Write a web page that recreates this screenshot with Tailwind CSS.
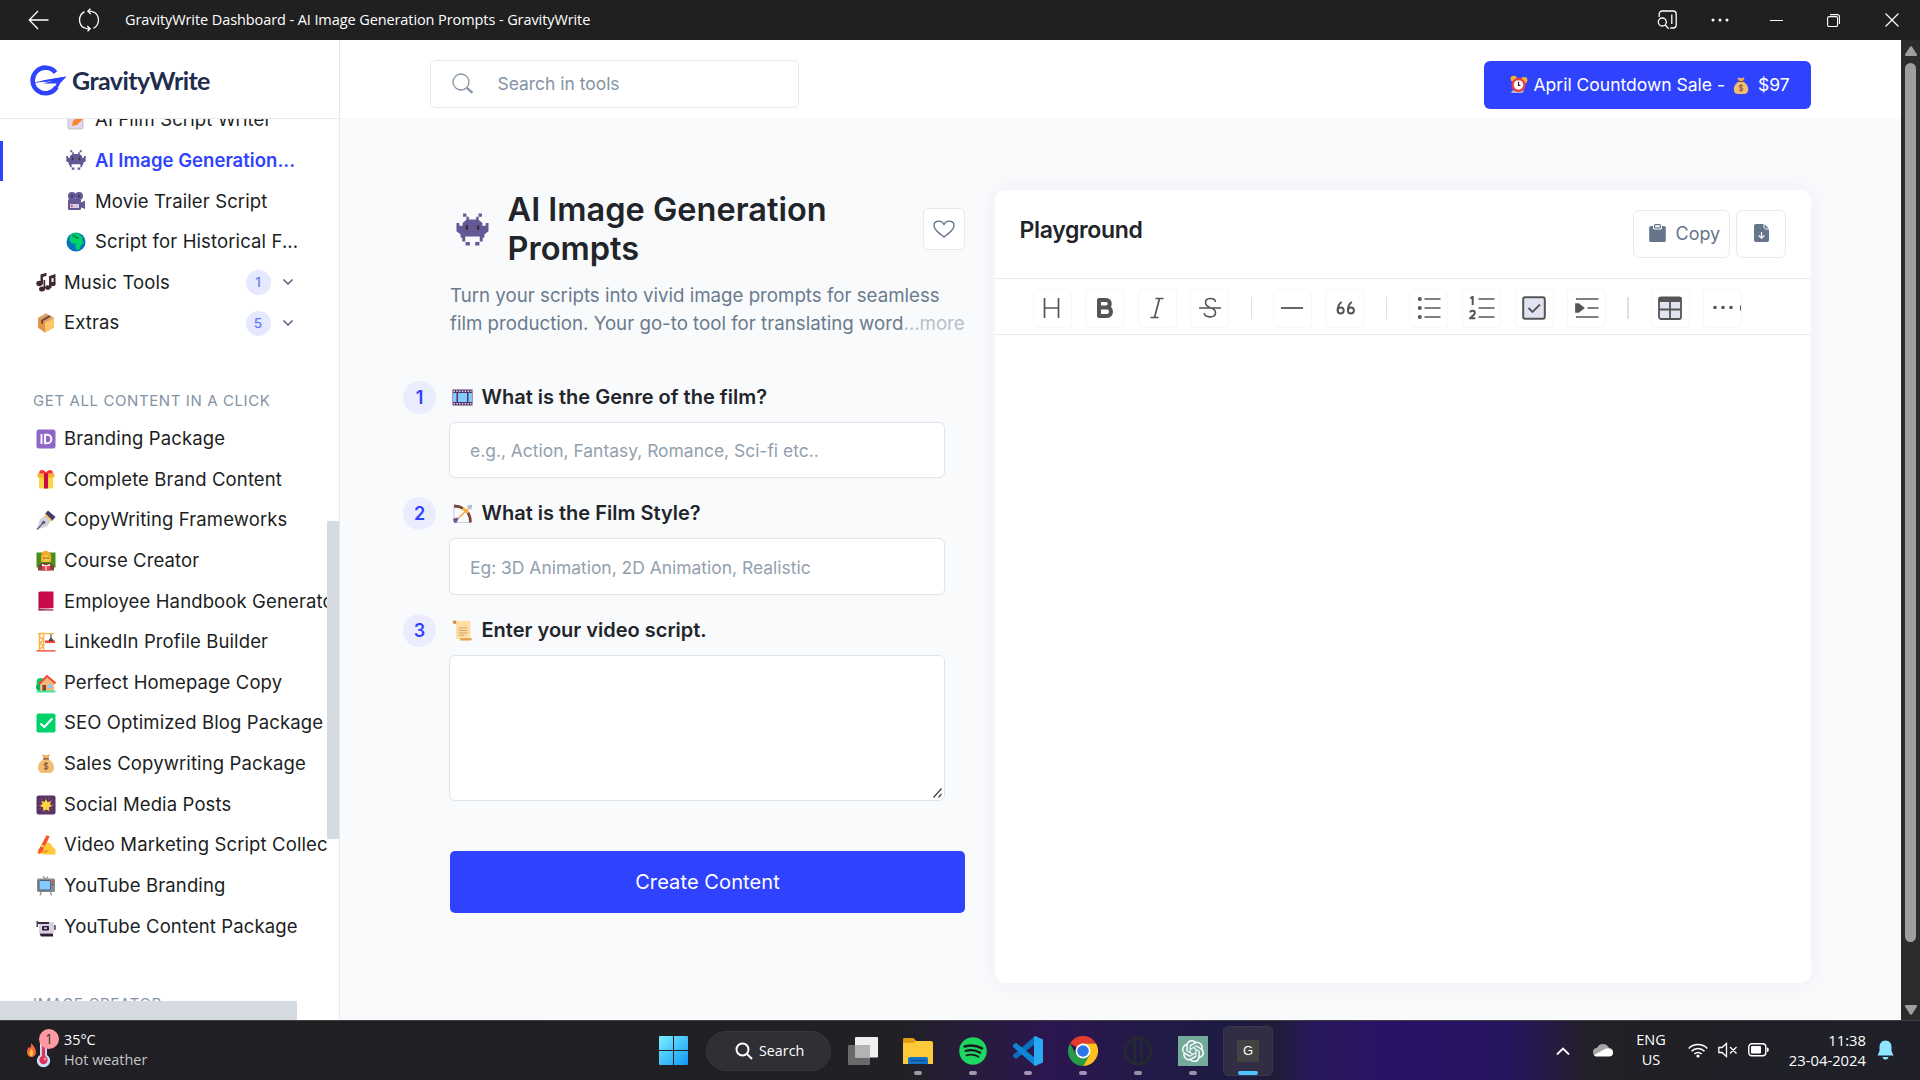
<!DOCTYPE html>
<html lang="en">
<head>
<meta charset="utf-8">
<title>GravityWrite Dashboard</title>
<script src="https://cdn.jsdelivr.net/npm/@tailwindcss/browser@4"></script>
</head>
<body class="w-[1920px] h-[1080px] overflow-hidden flex flex-col bg-white font-['Inter',sans-serif] text-[#212529]">

<svg class="hidden">
  <symbol id="alien" viewBox="0 0 20 20"><path d="M4.300.3h2v1.900h-2zM13.700.3h2v1.900h-2zM6.300 2.200h1.500v2.200H6.300zM12.200 2.200h1.500v2.200h-1.500zM6.500 4h7l2.500 2v1.800h2V6h1.700v5l-2.500 2v2h-1v2.200h-1.800v-2.900H5.600v2.900H3.800V15h-1v-2L.3 11V6H2v1.800h2V6zM5.800 17.500h2.600v2.200H5.800zM11.600 17.500h2.600v2.200h-2.600z" fill="#635994"/><path d="M5.900 7.400h1.400v2.800H5.900zM12.700 7.400h1.400v2.800h-1.400z" fill="#402a32"/></symbol>
  <symbol id="bag" viewBox="0 0 20 20"><path d="M7 .5l3 1 3-1 1 1-2 3H8l-2-3z" fill="#f3ad61"/><path d="M8 5h4c3.500 1.500 6 5 6 8.500 0 3.500-2 5.500-5 5.500H7c-3 0-5-2-5-5.500C2 10 4.500 6.500 8 5z" fill="#f1bd73"/><path d="M7 4.300h6v1.200H7z" fill="#7d4533"/><path d="M12 10.200c-.5-.8-1.200-1-2-1-2.600 0-2.600 2.600 0 2.900 2.600.3 2.600 3 0 3-.9 0-1.700-.4-2.100-1.200M10 8v8.300" stroke="#7d4533" stroke-width="1" fill="none"/></symbol>
  <symbol id="chev" viewBox="0 0 12 8"><path d="M1.500 1.500L6 6l4.500-4.500" fill="none" stroke="#4b5f78" stroke-width="1.500"/></symbol>
</svg>

<!-- Window title bar -->
<header class="h-10 shrink-0 bg-[#202020] text-white flex items-center font-['Open_Sans',sans-serif]">
  <svg class="ml-7 w-[21px] h-[20px]" viewBox="0 0 21 20" fill="none" stroke="#fff" stroke-width="1.300"><path d="M20.500 10H1.500M10 1L1.300 10l8.700 9"/></svg>
  <svg class="ml-[29px] w-[22px] h-[24px]" viewBox="0 0 22 24" fill="none" stroke="#fff" stroke-width="1.300"><path d="M6.500 3.600A9.500 9.500 0 0 0 6 20M15.500 20.400A9.500 9.500 0 0 0 16 4M12.500.8L9.800 3.300l3 2.700M10 3.300c2.500-.4 4.500.3 6 1.200M9.500 23.200l2.700-2.500-3-2.700M12 20.700c-2.500.4-4.500-.3-6-1.200"/></svg>
  <span class="ml-[25px] -mt-px text-[14.5px] whitespace-nowrap tracking-[-0.09px]">GravityWrite Dashboard - AI Image Generation Prompts - GravityWrite</span>
  <div class="ml-auto flex items-center pr-[21.5px]">
    <svg class="w-5 h-5" viewBox="0 0 20 20" fill="none" stroke="#fff" stroke-width="1.300"><path d="M2.200 7V4a3 3 0 0 1 3-3h11a3 3 0 0 1 3 3v11a3 3 0 0 1-3 3h-3M14.800 4.500v9.500"/><circle cx="5.300" cy="12" r="4"/><path d="M8.200 15l3.600 3.900"/></svg>
    <svg class="ml-[34px] w-[18px] h-1" viewBox="0 0 18 4" fill="#fff"><circle cx="2" cy="2" r="1.500"/><circle cx="9" cy="2" r="1.500"/><circle cx="16" cy="2" r="1.500"/></svg>
    <div class="ml-[41px] w-[13px] h-px bg-white"></div>
    <svg class="ml-[44px] w-[13px] h-[13px]" viewBox="0 0 13 13" fill="none" stroke="#fff" stroke-width="1.100"><rect x=".6" y="2.600" width="10" height="10" rx="1.500"/><path d="M3 .6h7.400a2 2 0 0 1 2 2V10"/></svg>
    <svg class="ml-[45px] w-[14px] h-[14px]" viewBox="0 0 14 14" stroke="#fff" stroke-width="1.200"><path d="M.5.500l13 13M13.500.500l-13 13"/></svg>
  </div>
</header>

<div class="h-[980px] shrink-0 flex">
  <!-- Sidebar -->
  <aside class="relative w-[340px] shrink-0 border-r border-[#e7e9ed] flex flex-col overflow-hidden bg-white">
    <div class="h-[79px] shrink-0 border-b border-[#e7eaee] flex items-center pl-[29px]">
      <svg class="w-[38px] h-[31px] mt-[2px]" viewBox="0 0 38 31"><path d="M26.500 7.500A12.800 12.800 0 1 0 27.500 22" fill="none" stroke="#2f43ff" stroke-width="4.600"/><path d="M4 17.500L37.500 11.500 31 18.500 28 24.500l-3-.5 2.500-5.500H14l9-2.500-19 2z" fill="#2f43ff"/><path d="M13 15.500l24-4-10 4.500-4-.5-6 1.500z" fill="#2f43ff"/></svg>
      <span class="ml-[5px] mt-[3px] text-[25px] font-bold font-['Lato',sans-serif] text-[#1f2d4d] tracking-[-0.55px]">GravityWrite</span>
    </div>
    <div class="flex-1 overflow-hidden mr-3">
      <nav class="-mt-[19.5px] text-[18.5px] tracking-[0.12px] whitespace-nowrap text-[#1b1e22]">
        <div class="h-[40.67px] flex items-center pl-[66px]"><svg class="w-5 h-5 shrink-0" viewBox="0 0 20 20"><rect x="2" y="2" width="15" height="17" rx="1.500" fill="#e1d8ec" stroke="#b4acbc" stroke-width=".7"/><path d="M6 16l1-5 8-8 4 4-8 8z" fill="#ff822d"/><path d="M14 3.500L16 1.500l4 3.500-2 2.500z" fill="#f8312f"/></svg><span class="ml-[9px]">AI Film Script Writer</span></div>
        <div class="relative h-[40.67px] flex items-center pl-[66px] text-[#2f43ff] font-semibold tracking-[0.04px]"><i class="absolute left-0 top-px w-[3px] h-10 bg-[#2f43ff]"></i><svg class="w-5 h-5 shrink-0"><use href="#alien"/></svg><span class="ml-[9px]">AI Image Generation...</span></div>
        <div class="h-[40.67px] flex items-center pl-[66px]"><svg class="w-5 h-5 shrink-0" viewBox="0 0 20 20" fill="#635994"><circle cx="6" cy="5" r="4"/><circle cx="13" cy="5" r="4"/><rect x="2" y="8" width="13" height="11" rx="1.500"/><path d="M14 12l5-2.500v8.500l-5-2z"/><path d="M4 13h9v4H4z" fill="#d8cbe6"/><path d="M5 14h1.500v2H5z" fill="#f33"/><circle cx="6" cy="5" r="1.200" fill="#433b6b"/><circle cx="13" cy="5" r="1.200" fill="#433b6b"/></svg><span class="ml-[9px] mt-px">Movie Trailer Script</span></div>
        <div class="h-[40.67px] flex items-center pl-[66px]"><svg class="w-5 h-5 shrink-0" viewBox="0 0 20 20"><circle cx="10" cy="10" r="9.500" fill="#0074ba"/><path d="M4 3l4-2 5 .5 4 4.500-1 2 2 3-3 2-1.500 4.500-2.500.5-1.500-3V11.500H6L3.500 8.500z" fill="#00d26a"/><path d="M6 4l3-.5 1 2 3 .5" stroke="#008463" fill="none" stroke-width="1.500"/></svg><span class="ml-[9px]">Script for Historical F...</span></div>
        <div class="h-[40.67px] flex items-center pl-[36px]"><svg class="w-5 h-5 shrink-0" viewBox="0 0 20 20" fill="#402a32"><path d="M4.500 2.500l6-1.800v3l-3.500 1.200v7.600H4.500zM12 4.500l7.500-2.500v3.200L15.500 6.500v9.500H13v-11.500zM17.500 3h2v9h-2z"/><ellipse cx="3.300" cy="11.500" rx="3" ry="2.700"/><ellipse cx="11.800" cy="15.500" rx="2.700" ry="2.300"/><ellipse cx="6" cy="17" rx="3" ry="2.500"/><ellipse cx="17" cy="12" rx="2.600" ry="2.200"/><path d="M7.500 8h1.700v9H7.500z"/></svg><span class="ml-2">Music Tools</span><b class="ml-auto w-[25px] h-[25px] rounded-full bg-[#e6e8ff] text-[#6b77f5] text-[13.5px] font-medium flex items-center justify-center">1</b><svg class="ml-[11px] mr-[33.5px] w-3 h-2 shrink-0"><use href="#chev"/></svg></div>
        <div class="h-[40.67px] flex items-center pl-[36px]"><svg class="w-5 h-5 shrink-0" viewBox="0 0 20 20"><path d="M2 5l8-4.500 8 4.500v9.500L9 19.500l-7-5z" fill="#e39d5d"/><path d="M2 5l7 4.500v10l-7-5z" fill="#e19747"/><path d="M9 9.500L18 5v9.500l-9 5z" fill="#ffc56b"/><path d="M2 5l8-4.500L18 5 9 9.500z" fill="#d9a46e"/><path d="M5 7l8-4.800L15 3.500 7 8.200v3L5 10z" fill="#7d4533"/></svg><span class="ml-2">Extras</span><b class="ml-auto w-[25px] h-[25px] rounded-full bg-[#e6e8ff] text-[#6b77f5] text-[13.5px] font-medium flex items-center justify-center">5</b><svg class="ml-[11px] mr-[33.5px] w-3 h-2 shrink-0"><use href="#chev"/></svg></div>

        <h6 class="h-[75px] pt-[46px] pl-[33px] text-[15px] leading-[23px] font-normal text-[#8493a5] tracking-[0.6px]">GET ALL CONTENT IN A CLICK</h6>

        <div class="h-[40.67px] flex items-center pl-[36px] gap-2"><svg class="w-5 h-5 shrink-0" viewBox="0 0 20 20"><rect x=".5" y=".5" width="19" height="19" rx="2.500" fill="#8f65c5"/><path d="M5.500 5v10M9 5.700v8.600h2.300c5.400 0 5.400-8.600 0-8.600z" fill="none" stroke="#fff" stroke-width="1.900"/></svg><span>Branding Package</span></div>
        <div class="h-[40.67px] flex items-center pl-[36px] gap-2"><svg class="w-5 h-5 shrink-0" viewBox="0 0 20 20"><path d="M3 8h14v11.500H3z" fill="#fcd53f"/><path d="M1.500 4.500h17v4h-17z" fill="#ffb02e"/><path d="M8 4h4v15.500H8z" fill="#ca0b4a"/><path d="M3 4.500C3 0 8 0 10 3.500 12 0 17 0 17 4.500z" fill="#f8312f"/></svg><span>Complete Brand Content</span></div>
        <div class="h-[40.67px] flex items-center pl-[36px] gap-2"><svg class="w-5 h-5 shrink-0" viewBox="0 0 20 20"><path d="M1 19.500L4 9l6-4 5 5.500-4 6z" fill="#d3d3d3"/><path d="M1 19.500l6-6.500" stroke="#635994" stroke-width="1.200"/><circle cx="7.500" cy="12.500" r="1.800" fill="#635994"/><path d="M9 4l3-3.500 7.500 6.500-3.500 4z" fill="#433b6b"/><path d="M8.500 4.500L9.500 3.500l7 7-1 1z" fill="#f9c23c"/></svg><span>CopyWriting Frameworks</span></div>
        <div class="h-[40.67px] flex items-center pl-[36px] gap-2"><svg class="w-5 h-5 shrink-0" viewBox="0 0 20 20"><rect x=".5" y="1.500" width="19" height="15" fill="#44911b"/><path d="M2 19.500v-5l4-2.500h8l4 2.500v5z" fill="#7d4533"/><path d="M5 11C4.500 1 7-.5 10 0c4 0 6 3 5 11z" fill="#f9a72e"/><circle cx="10" cy="7.500" r="3.500" fill="#ffc83d"/><path d="M7 7h2.500M10.500 7H13" stroke="#7d4533"/><path d="M6 13l4 1.500 4-1.500v2H6z" fill="#fff"/><path d="M6 15h8v4.500H6z" fill="#ef3a5d"/><path d="M9.300 14h1.500v5.500H9.300z" fill="#ffd5a0"/></svg><span>Course Creator</span></div>
        <div class="h-[40.67px] flex items-center pl-[36px] gap-2"><svg class="w-5 h-5 shrink-0" viewBox="0 0 20 20"><path d="M2.500 1h14.500v16l-14.500 2.500z" fill="#990838"/><rect x="3.500" y=".5" width="14" height="16.500" fill="#ca0b4a"/><path d="M3.500 17.300h13.800v1H3.500z" fill="#e9dff0"/><path d="M3 18.400h14.500v1.100H3z" fill="#990838"/></svg><span>Employee Handbook Generator</span></div>
        <div class="h-[40.67px] flex items-center pl-[36px] gap-2"><svg class="w-5 h-5 shrink-0" viewBox="0 0 20 20"><path d="M3 1.500h7M3.500 1v17M7.500 3v15M4 5l3.500 3L4 11l3.500 3L4 17" stroke="#f9b44a" stroke-width="1.500" fill="none"/><path d="M9 8.500h10V11H9z" fill="#f8412f"/><path d="M2 1h16v1.200H2z" fill="#f9b44a"/><path d="M15 2v3.500l-2 3h4l-2-3" stroke="#433b4b" fill="#666"/><path d="M.5 18h19v1.700H.5z" fill="#f86a5f"/></svg><span>LinkedIn Profile Builder</span></div>
        <div class="h-[40.67px] flex items-center pl-[36px] gap-2"><svg class="w-5 h-5 shrink-0" viewBox="0 0 20 20"><circle cx="4.500" cy="9" r="4" fill="#00d26a"/><circle cx="4" cy="14" r="4" fill="#00b85c"/><path d="M4 10.500L11 4l7 6.500V18H4z" fill="#f3b77b"/><path d="M3 11L11 3l8.500 7.500" stroke="#f8412f" stroke-width="2" fill="none"/><path d="M6.500 12h3.500v6H6.500z" fill="#7d4533"/><path d="M12.500 11.500h3.500v3.500h-3.500z" fill="#7ad0ff"/><path d="M.5 17.500h19v2H.5z" fill="#3ee89a"/></svg><span>Perfect Homepage Copy</span></div>
        <div class="h-[40.67px] flex items-center pl-[36px] gap-2"><svg class="w-5 h-5 shrink-0" viewBox="0 0 20 20"><rect x=".5" y=".5" width="19" height="19" rx="2" fill="#00d26a"/><path d="M4.500 10.500l3.800 3.500 8-8.500" fill="none" stroke="#fff" stroke-width="2"/></svg><span>SEO Optimized Blog Package</span></div>
        <div class="h-[40.67px] flex items-center pl-[36px] gap-2"><svg class="w-5 h-5 shrink-0"><use href="#bag"/></svg><span>Sales Copywriting Package</span></div>
        <div class="h-[40.67px] flex items-center pl-[36px] gap-2"><svg class="w-5 h-5 shrink-0" viewBox="0 0 20 20"><rect x=".5" y=".5" width="19" height="19" rx="2" fill="#533566"/><circle cx="10" cy="10" r="7" fill="none" stroke="#d8413f" stroke-width="1.500" stroke-dasharray="1 2.500"/><path d="M10 4l1.500 3.200L15 6l-1 3.400 2.500 1.600-3.500 1.300.2 3.700-3.200-1.600L7.300 16l-.3-3.700L3.800 11l2.700-1.900L5.300 6l3.200 1z" fill="#fcd53f"/></svg><span>Social Media Posts</span></div>
        <div class="h-[40.67px] flex items-center pl-[36px] gap-2"><svg class="w-5 h-5 shrink-0" viewBox="0 0 20 20"><path d="M1 16.500L6.500 9l5.500-1.500 2.500 1 1.500 2.500 3.500 3.500v5H8L1.500 18z" fill="#ffc83d"/><path d="M6 17.800l4-3 2.500 1.200-2 1.800z" fill="#f09a1e"/><path d="M10.500.3l3.200 1.200L6.300 16.500 2.500 19.500l.2-4.500z" fill="#f8512f"/><path d="M5.500 9.500l4.500 1.500-1 2-4.500-1.500z" fill="#ffc83d"/></svg><span>Video Marketing Script Collection</span></div>
        <div class="h-[40.67px] flex items-center pl-[36px] gap-2"><svg class="w-5 h-5 shrink-0" viewBox="0 0 20 20"><path d="M7 .5l3 3 2-3M5.500 15l-1.500 4.500M14 15l1.500 4.500" stroke="#888" stroke-width="1.100" fill="none"/><rect x="1" y="2.500" width="18" height="13.500" rx="1.500" fill="#8b8b8b"/><rect x="3" y="4.500" width="11.500" height="9.500" rx="1" fill="#83cbff" stroke="#444a60" stroke-width=".8"/><circle cx="16.800" cy="5.500" r="1" fill="#f33"/><circle cx="16.800" cy="8.500" r=".8" fill="#444"/></svg><span>YouTube Branding</span></div>
        <div class="h-[40.67px] flex items-center pl-[36px] gap-2"><svg class="w-5 h-5 shrink-0" viewBox="0 0 20 20"><path d="M.5 4h1.500v6H.5zM18.200 8h1.500v5h-1.500z" fill="#433b6b"/><rect x="3" y="5" width="15" height="11" rx="1" fill="#d7d3dc"/><path d="M2 5h11v2H2z" fill="#3a2c46"/><rect x="6" y="9" width="7" height="4.500" rx="1" fill="#321b41"/><path d="M8 10.500h3v1.300H8z" fill="#fff"/><path d="M3.500 16.500h13.500v3H5z" fill="#321b41"/></svg><span>YouTube Content Package</span></div>
        <h6 class="pt-[45px] pl-[33px] text-[15px] leading-[23px] font-normal text-[#8493a5] tracking-[0.6px]">IMAGE CREATOR</h6>
      </nav>
    </div>
    <i class="absolute left-[327px] top-[481px] w-3 h-[318px] bg-[#d6dae1]"></i>
    <i class="absolute left-0 bottom-0 w-[297px] h-[19px] bg-[#d6dae1]"></i>
  </aside>

  <!-- Content -->
  <main class="flex-1 flex flex-col bg-[#f9fafc]">
    <div class="h-[78px] shrink-0 bg-white flex items-center justify-between pl-[90px] pr-[90px]">
      <div class="w-[369px] h-[48px] mt-[9px] rounded-[6px] border border-[#e7eaee] flex items-center pl-[21px] text-[#8493a5]">
        <svg class="w-[22px] h-[21px]" viewBox="0 0 22 21" fill="none" stroke="#8493a5" stroke-width="1.300"><circle cx="9" cy="9" r="8"/><path d="M14.800 14.800l5.700 5" stroke-width="2.200"/></svg>
        <span class="ml-[23.5px] mt-0.5 text-[17.45px]">Search in tools</span>
      </div>
      <div class="w-[327px] h-[48px] mt-[12px] rounded-[6px] bg-[#2f43ff] text-white text-[17.5px] flex items-center whitespace-nowrap pl-[25px]">
        <svg class="w-[19px] h-[19px] -mt-0.5" viewBox="0 0 20 20"><path d="M4 16l-2 3h12l2-3z" fill="#b4bccc"/><circle cx="5" cy="4" r="3.300" fill="#f9b42e"/><circle cx="16" cy="5.500" r="3.300" fill="#f9b42e"/><circle cx="10" cy="10.500" r="7.500" fill="#e8403f"/><circle cx="10" cy="10.500" r="5" fill="#fff"/><path d="M10 7v4h2" stroke="#402a32" stroke-width="1.300" fill="none"/></svg>
        <span class="ml-[5.5px]">April Countdown Sale -</span>
        <svg class="ml-[7px] w-[18px] h-[18px] mt-px"><use href="#bag"/></svg>
        <span class="ml-[8px]">$97</span>
      </div>
    </div>

    <div class="flex-1 flex">
      <!-- Tool form -->
      <section class="w-[655px] pt-[72px] pl-[63px]">
        <div class="ml-[47px] w-[515px]">
          <div class="flex items-center">
            <svg class="ml-[5px] w-[35px] h-[33px] mt-px"><use href="#alien"/></svg>
            <h1 class="ml-[17.5px] text-[32.5px] leading-[39px] font-semibold flex-1">AI Image Generation<br>Prompts</h1>
            <div class="w-[42px] h-[42px] rounded-[5px] border border-[#e7e9ed] bg-white flex items-center justify-center"><svg class="w-[22px] h-[18px]" viewBox="0 0 22 18" fill="none" stroke="#5c6f84" stroke-width="1.300"><path d="M11 17C5 12.500 1 9.500 1 5.500c0-5 7.500-6.300 10-1 2.500-5.300 10-4 10 1 0 4-4 7-10 11.500z"/></svg></div>
          </div>
          <p class="mt-[14px] text-[18.7px] leading-[28px] text-[#6a7b8d] whitespace-nowrap">Turn your scripts into vivid image prompts for seamless<br>film production. Your go-to tool for translating word<span class="text-[#b6bfc9]">...more</span></p>
        </div>

        <div class="mt-[43px] flex items-center h-[33px]">
          <b class="w-[33px] h-[33px] rounded-full bg-[#ececff] text-[#2f43ff] text-[18px] font-semibold flex items-center justify-center">1</b>
          <svg class="ml-4 w-[21px] h-[20px]" viewBox="0 0 21 20"><rect x=".5" y="1.500" width="20" height="16" fill="#533566"/><path d="M1 5h3.500v9H1zM6 5h9v9H6zM16.500 5H20v9h-3.500z" fill="#83cbff"/><path d="M1.500 3.200h18M1.500 15.800h18" stroke="#e6dcf0" stroke-width="1.500" stroke-dasharray="1.400 1.400"/></svg>
          <span class="ml-[8.5px] -mt-px text-[20px] font-semibold">What is the Genre of the film?</span>
        </div>
        <div class="ml-[46px] mt-[8px] w-[496px] h-[56px] rounded-[6px] border border-[#e0e4e9] bg-white flex items-center pl-5 pt-[3px] text-[17.45px] text-[#93a0ae]">e.g., Action, Fantasy, Romance, Sci-fi etc..</div>

        <div class="mt-[19px] flex items-center h-[33px]">
          <b class="w-[33px] h-[33px] rounded-full bg-[#ececff] text-[#2f43ff] text-[18px] font-semibold flex items-center justify-center">2</b>
          <svg class="ml-4 w-[21px] h-[20px]" viewBox="0 0 21 20" fill="none"><path d="M2 2.500V18.500H18" stroke="#d0c8dc" stroke-width="1"/><path d="M2 2l5 .5 4 2M18.500 18.500l-.5-5-2-5" stroke="#7d4533" stroke-width="2.800"/><path d="M11 4.500l5 4" stroke="#f9b42e" stroke-width="3"/><path d="M3 17.500L17 4" stroke="#f3a355" stroke-width="1.400"/><path d="M14.500 2L20.500.5 19 6z" fill="#b4bccc"/><path d="M.8 15l4-1.500 1.500 1.500-2 4-2-.5z" fill="#635994"/></svg>
          <span class="ml-[8.5px] -mt-px text-[20px] font-semibold">What is the Film Style?</span>
        </div>
        <div class="ml-[46px] mt-[8px] w-[496px] h-[57px] rounded-[6px] border border-[#e0e4e9] bg-white flex items-center pl-5 pt-[3px] text-[17.45px] text-[#93a0ae]">Eg: 3D Animation, 2D Animation, Realistic</div>

        <div class="mt-[19px] flex items-center h-[33px]">
          <b class="w-[33px] h-[33px] rounded-full bg-[#ececff] text-[#2f43ff] text-[18px] font-semibold flex items-center justify-center">3</b>
          <svg class="ml-4 w-[21px] h-[21px]" viewBox="0 0 21 21"><path d="M1 .8h15.500c1.500 0 2 1 2 2V19H6c-1.500 0-2-1-2-2V4H1.500z" fill="#ffdea7"/><path d="M.7.800h3.500v3H1.500z" fill="#d3883e"/><path d="M8 18.200h12c0 1.500-1 2.300-2 2.300H8z" fill="#e39d4d"/><path d="M6.500 8h9M6.500 10.500h9M6.500 13h9M6.500 15.200h6" stroke="#d9a25f"/></svg>
          <span class="ml-[8.5px] -mt-px text-[20px] font-semibold">Enter your video script.</span>
        </div>
        <div class="ml-[46px] mt-[8px] w-[496px] h-[146px] rounded-[6px] border border-[#e0e4e9] bg-white flex items-end justify-end p-[2px]"><svg class="w-[9px] h-[10px]" viewBox="0 0 9 10" stroke="#444" stroke-width="1.300"><path d="M.5 9.500l8-9M5.500 9.500l3-3.500"/></svg></div>

        <button class="ml-[47px] mt-[50px] w-[515px] h-[62px] rounded-[5px] bg-[#2f43ff] text-white text-[20px] tracking-[0.1px] block">Create Content</button>
      </section>

      <!-- Playground -->
      <section class="mt-[72px] w-[816px] h-[793px] rounded-[10px] bg-white shadow-[0_0_22px_rgba(40,50,80,0.06)]">
        <div class="h-[88px] flex items-center pl-[24.5px] pr-[25px]">
          <h2 class="text-[23px] tracking-[-0.33px] font-semibold -mt-[7px]">Playground</h2>
          <div class="ml-auto h-[48px] w-[97px] rounded-[6px] border border-[#e7e9ed] flex items-center pl-[15px] text-[18px] text-[#66758a]">
            <svg class="w-[17px] h-[18px] -mt-0.5" viewBox="0 0 17 18"><path d="M2 2h2v2.500l1 1h7l1-1V2h2a1.800 1.800 0 0 1 1.800 1.800V16A1.800 1.800 0 0 1 15 18H2a1.800 1.800 0 0 1-1.800-2V3.800A1.800 1.800 0 0 1 2 2z" fill="#66758a"/><rect x="5.500" y=".7" width="6" height="3.200" rx="1" fill="none" stroke="#66758a" stroke-width="1.200"/></svg>
            <span class="ml-[9.5px] -mt-px">Copy</span>
          </div>
          <div class="ml-[6px] h-[48px] w-[50px] rounded-[6px] border border-[#e7e9ed] flex items-center justify-center"><svg class="w-[15px] h-[18px] -mt-0.5" viewBox="0 0 15 18"><path d="M2 0h7.500v3.500L11.500 5.500H15V16a2 2 0 0 1-2 2H2a2 2 0 0 1-2-2V2a2 2 0 0 1 2-2zM10.500.300L14.700 4.500h-3a1.200 1.200 0 0 1-1.200-1.200z" fill="#66758a"/><path d="M7.500 8v6M4.700 11.500l2.800 2.700 2.800-2.700" stroke="#fff" stroke-width="1.200" fill="none"/></svg></div>
        </div>
        <div class="h-[57px] border-t border-b border-[#e9e9ee] flex items-center pl-[37.5px] pt-[3px] gap-[13.6px] text-[#555]">
          <div class="w-[39px] h-[39px] shrink-0 rounded-[4px] border border-[#f7f7fa] grid place-items-center"><svg class="w-[24px] h-[24px]" viewBox="0 0 24 24" fill="none" stroke="#555" stroke-width="1.700"><path d="M4.500 2v20M18.500 2v20M4.500 12h14"/></svg></div>
          <div class="w-[39px] h-[39px] shrink-0 rounded-[4px] border border-[#f7f7fa] grid place-items-center"><svg class="w-[24px] h-[24px]" viewBox="0 0 24 24" fill="none" stroke="#555" stroke-width="4"><path d="M6 4h7c5 0 5 7.500 0 7.500H6zM6 11.500h8c5.300 0 5.300 8.500 0 8.500H6z" stroke-linejoin="round"/></svg></div>
          <div class="w-[39px] h-[39px] shrink-0 rounded-[4px] border border-[#f7f7fa] grid place-items-center"><svg class="w-[24px] h-[24px]" viewBox="0 0 24 24" fill="none" stroke="#555" stroke-width="1.700"><path d="M10.500 2.500h8M5.500 21.500h8M14.500 2.500l-5 19"/></svg></div>
          <div class="w-[39px] h-[39px] shrink-0 rounded-[4px] border border-[#f7f7fa] grid place-items-center"><svg class="w-[24px] h-[24px]" viewBox="0 0 24 24" fill="none" stroke="#555" stroke-width="1.600"><path d="M1 12h22M17.500 6C17 1 7.500 1.500 7.500 6.500c0 3 2.500 4.300 5 5.200 3 1 5 2.200 5 5 0 5.500-10.500 5.500-11.300.5"/></svg></div>
          <i class="mx-[7.7px] w-px shrink-0 h-[22px] bg-[#dfdfe6]"></i>
          <div class="w-[39px] h-[39px] shrink-0 rounded-[4px] border border-[#f7f7fa] grid place-items-center"><svg class="w-[24px] h-[24px]" viewBox="0 0 24 24" stroke="#555" stroke-width="1.800"><path d="M1 12h22"/></svg></div>
          <div class="w-[39px] h-[39px] shrink-0 rounded-[4px] border border-[#f7f7fa] grid place-items-center"><svg class="w-[24px] h-[24px]" viewBox="0 0 24 24" fill="none" stroke="#555" stroke-width="2"><circle cx="7.700" cy="14.500" r="3"/><circle cx="17.900" cy="14.500" r="3"/><path d="M4.700 14.500c0-4 1.500-7 4-8.500M14.900 14.500c0-4 1.500-7 4-8.500"/></svg></div>
          <i class="mx-[8.4px] w-px shrink-0 h-[22px] bg-[#dfdfe6]"></i>
          <div class="w-[39px] h-[39px] shrink-0 rounded-[4px] border border-[#f7f7fa] grid place-items-center"><svg class="w-[24px] h-[24px]" viewBox="0 0 24 24" stroke="#555" stroke-width="1.700"><path d="M7.500 3h16M7.500 12h16M7.500 21h16"/><g fill="#555" stroke="none"><circle cx="2.800" cy="3" r="2"/><circle cx="2.800" cy="12" r="2"/><circle cx="2.800" cy="21" r="2"/></g></svg></div>
          <div class="w-[39px] h-[39px] shrink-0 rounded-[4px] border border-[#f7f7fa] grid place-items-center"><svg class="w-[26px] h-[24px]" viewBox="0 0 26 24" fill="none" stroke="#555" stroke-width="1.700"><path d="M9.500 3h16M9.500 12h16M9.500 21h16"/><path d="M1.300 2.500l2.400-1.800V9M1 16.300c1-2.300 5-2 4.800.5-.2 2-3 3.500-4.500 5.400h5" stroke-width="2"/></svg></div>
          <div class="w-[39px] h-[39px] shrink-0 rounded-[4px] border border-[#f7f7fa] grid place-items-center"><svg class="w-[24px] h-[24px]" viewBox="0 0 24 24" stroke="#555" stroke-width="2"><rect x="1.200" y="1.200" width="21.600" height="21.600" rx="2" fill="#e1e4f0"/><path d="M6.500 12l4 4 7.500-7.500" fill="none" stroke-width="1.800"/></svg></div>
          <div class="w-[39px] h-[39px] shrink-0 rounded-[4px] border border-[#f7f7fa] grid place-items-center"><svg class="w-[24px] h-[24px]" viewBox="0 0 24 24" stroke="#555" stroke-width="1.700"><path d="M1 3h22.500M12.500 12h11M1 21h22.500"/><path d="M1 8h2.500l5 4-5 4H1z" fill="#555"/></svg></div>
          <i class="mx-[7.6px] w-0.5 shrink-0 h-[22px] bg-[#dfdfe6]"></i>
          <div class="w-[39px] h-[39px] shrink-0 rounded-[4px] border border-[#f7f7fa] grid place-items-center"><svg class="w-[24px] h-[24px]" viewBox="0 0 24 24" stroke="#555" stroke-width="1.800"><rect x="1" y="1.500" width="22" height="21.500" rx="2" fill="#e1e4f0"/><path d="M1.500 2h21v3h-21z" fill="#555"/><path d="M12 5v18M1 13.500h22"/></svg></div>
          <div class="w-[39px] h-[39px] shrink-0 rounded-[4px] border border-[#f7f7fa] flex items-center justify-end"><svg class="w-[29px] h-[20px] shrink-0" viewBox="0 0 29 20" fill="#555"><circle cx="3" cy="9.500" r="1.800"/><circle cx="11" cy="9.500" r="1.800"/><circle cx="19" cy="9.500" r="1.800"/><path d="M28 7.500h1v5h-1z"/></svg></div>
        </div>
      </section>
    </div>
  </main>

  <!-- Page scrollbar -->
  <div class="w-[19px] shrink-0 bg-[#2c2c2c] flex flex-col items-center pt-[6px] pb-[5px]">
    <svg class="w-3 h-2.5 shrink-0" viewBox="0 0 12 10"><path d="M5 .7Q6-.3 7 .7L12 8.500Q12 10 11 10H1Q0 10 0 8.500z" fill="#9f9f9f"/></svg>
    <div class="mt-[7px] w-[11px] h-[879px] rounded-full bg-[#9f9f9f]"></div>
    <svg class="mt-auto w-3 h-2.5 shrink-0" viewBox="0 0 12 10"><path d="M5 9.300Q6 10.300 7 9.300L12 1.500Q12 0 11 0H1Q0 0 0 1.500z" fill="#9f9f9f"/></svg>
  </div>
</div>

<!-- Taskbar -->
<footer class="h-[60px] shrink-0 border-t border-[#3d3d42] bg-[linear-gradient(90deg,#202024_0px,#212025_900px,#261c38_960px,#2c1650_1050px,#221a48_1150px,#1d1b42_1230px,#201c38_1275px,#28185a_1310px,#2a1168_1400px,#27155f_1510px,#232027_1590px,#201f26_1700px,#1f2029_1920px)] text-white flex items-center font-['Open_Sans',sans-serif]">
  <div class="w-[659px] flex pl-[27px]">
    <div class="relative w-[32px] h-[36px]">
      <svg class="w-[32px] h-[40px] -mt-0.5" viewBox="0 0 32 40"><path d="M4 13c3 3 5 6 5 9 0 3-2 5-4.500 5S0 25 0 22c0-2 1-4 2-5l1 1c1-1.500 1.300-3 1-5z" fill="#f2673c"/><path d="M4.500 19c2 2 2.500 6 0 7-2.800-.5-2.500-4 0-7z" fill="#ffc83d"/><path d="M13 10a3.500 3.500 0 0 1 7 0v15a6.600 6.600 0 1 1-7 0z" fill="#c9e4fb"/><circle cx="16.500" cy="30" r="4.200" fill="#e0345c"/><path d="M14.800 14h3.400v15h-3.400z" fill="#e0345c"/><circle cx="18" cy="29" r="1.300" fill="#ff9aa5"/></svg>
      <i class="absolute left-3 -top-[3px] w-5 h-5 rounded-full bg-[#ff9aa5] text-[#332] text-[14px] not-italic flex items-center justify-center">1</i>
    </div>
    <div class="ml-[5px] text-[14.4px] leading-[20px] -mt-0.5"><div>35°C</div><div class="text-[#c5c5c8]">Hot weather</div></div>
  </div>
  <svg class="w-[29px] h-[29px] shrink-0" viewBox="0 0 29 29"><defs><linearGradient id="wg" x2="1" y2="1"><stop stop-color="#7cf0ff"/><stop offset="1" stop-color="#0f96f5"/></linearGradient></defs><path d="M0 1a1 1 0 0 1 1-1h13v14H0zM15 0h13a1 1 0 0 1 1 1v13H15zM0 15h14v14H1a1 1 0 0 1-1-1zM15 15h14v13a1 1 0 0 1-1 1H15z" fill="url(#wg)"/></svg>
  <div class="ml-[18px] w-[125px] h-10 rounded-full bg-[#303034] border border-[#37373b] flex items-center pl-[28px]">
    <svg class="w-[18px] h-[18px]" viewBox="0 0 18 18" fill="none" stroke="#fff" stroke-width="2"><circle cx="7.500" cy="7.500" r="6"/><path d="M12 12l5 5"/></svg>
    <span class="ml-[6px] text-[14.3px]">Search</span>
  </div>
  <svg class="ml-[17px] w-[30px] h-[28px] shrink-0" viewBox="0 0 30 28"><rect y="8" width="22" height="20" rx="1" fill="#69696b"/><rect x="7" width="23" height="20.500" rx="1" fill="#efefef"/><path d="M7 8h15v12.500H7z" fill="#b3b3b5"/></svg>
  <div class="ml-[12.5px] flex">
    <div class="w-[55px] h-[50px] flex flex-col items-center pt-[10px]"><svg class="w-[30px] h-[30px]" viewBox="0 0 30 30"><path d="M0 4a2 2 0 0 1 2-2h8l3 3h15a2 2 0 0 1 2 2v21H0z" fill="#ffc93c"/><path d="M0 4a2 2 0 0 1 2-2h8l3 2.500L10.500 7H0z" fill="#e09c10"/><path d="M5 28v-5a2 2 0 0 1 2-2h16a2 2 0 0 1 2 2v5z" fill="#1173c6"/><path d="M8 24.500h14" stroke="#0b4c8c" stroke-width="1.200"/></svg><i class="mt-[5px] w-2 h-1 rounded-full bg-[#9c9ca0]"></i></div>
    <div class="w-[55px] h-[50px] flex flex-col items-center pt-[10px]"><svg class="w-[30px] h-[30px]" viewBox="0 0 30 30" fill="none" stroke="#1a1a20" stroke-linecap="round"><circle cx="15" cy="15" r="13.800" fill="#1ed760" stroke="none"/><path d="M6.500 10.500c6-1.700 12.500-1 17.500 1.800" stroke-width="2.600"/><path d="M7.500 15c5-1.400 10.500-.8 14.700 1.700" stroke-width="2.200"/><path d="M8.500 19.300c4-1 8.500-.6 12 1.500" stroke-width="1.800"/></svg><i class="mt-[5px] w-2 h-1 rounded-full bg-[#a09aab]"></i></div>
    <div class="w-[55px] h-[50px] flex flex-col items-center pt-[10px]"><svg class="w-[30px] h-[30px]" viewBox="0 0 30 30"><path d="M22 0L22 8 3 23 0 20.500V19z" fill="#0a6fbd"/><path d="M0 9l3-2.200L22 22v8L0 11z" fill="#0d86d6"/><path d="M22 0l8 3.500v23L22 30l-1-1V1z" fill="#29a9f2"/></svg><i class="mt-[5px] w-2 h-1 rounded-full bg-[#a093b5]"></i></div>
    <div class="w-[55px] h-[50px] flex flex-col items-center pt-[10px]"><svg class="w-[30px] h-[30px]" viewBox="0 0 30 30"><path d="M15 15L2 7.500A15 15 0 0 1 28 7.500H15z" fill="#e33b2e"/><path d="M15 7.500h13A15 15 0 0 1 15 30l6.500-11.300z" fill="#fcc31e"/><path d="M2 7.500A15 15 0 0 0 15 30l6.500-11.300L15 22l-6.500-3.200z" fill="#269a49"/><circle cx="15" cy="15" r="7.500" fill="#fff"/><circle cx="15" cy="15" r="5.800" fill="#2e74ea"/></svg><i class="mt-[5px] w-2 h-1 rounded-full bg-[#a093b5]"></i></div>
    <div class="w-[55px] h-[50px] flex flex-col items-center pt-[10px]"><svg class="w-[30px] h-[30px]" viewBox="0 0 30 30" fill="none" stroke="#242832"><circle cx="15" cy="15" r="13" stroke-width="3.500"/><path d="M11.500 5v20M18.500 5v20" stroke-width="3.500"/></svg><i class="mt-[5px] w-2 h-1 rounded-full bg-[#9694ad]"></i></div>
    <div class="w-[55px] h-[50px] flex flex-col items-center pt-[10px]"><svg class="w-[30px] h-[30px]" viewBox="0 0 30 30"><path d="M0 0h30v30H0z" fill="#74aa9c"/><g transform="translate(4 4) scale(.92)"><path fill="#fff" d="M22.282 9.821a5.985 5.985 0 0 0-.516-4.910 6.046 6.046 0 0 0-6.510-2.900A6.065 6.065 0 0 0 4.981 4.182a5.985 5.985 0 0 0-3.998 2.900 6.046 6.046 0 0 0 .743 7.097 5.980 5.980 0 0 0 .511 4.911 6.051 6.051 0 0 0 6.515 2.900A5.985 5.985 0 0 0 13.260 24a6.056 6.056 0 0 0 5.772-4.206 5.990 5.990 0 0 0 3.998-2.900 6.056 6.056 0 0 0-.748-7.073zM13.260 22.430a4.476 4.476 0 0 1-2.877-1.040l.142-.081 4.779-2.758a.795.795 0 0 0 .393-.681v-6.737l2.020 1.169a.071.071 0 0 1 .038.052v5.583a4.504 4.504 0 0 1-4.495 4.493zM3.600 18.304a4.471 4.471 0 0 1-.535-3.014l.142.085 4.783 2.759a.771.771 0 0 0 .781 0l5.843-3.369v2.332a.080.080 0 0 1-.033.062L9.740 19.950a4.500 4.500 0 0 1-6.140-1.646zM2.341 7.896a4.485 4.485 0 0 1 2.366-1.973V11.600a.766.766 0 0 0 .388.677l5.815 3.354-2.020 1.169a.076.076 0 0 1-.071 0l-4.830-2.787A4.504 4.504 0 0 1 2.341 7.872zm16.596 3.856l-5.833-3.387L15.119 7.200a.076.076 0 0 1 .071 0l4.830 2.791a4.494 4.494 0 0 1-.676 8.105v-5.678a.790.790 0 0 0-.407-.666zm2.010-3.023l-.141-.085-4.774-2.782a.776.776 0 0 0-.785 0L9.409 9.230V6.897a.066.066 0 0 1 .028-.061l4.830-2.787a4.500 4.500 0 0 1 6.680 4.660zM8.307 12.863l-2.020-1.164a.080.080 0 0 1-.038-.057V6.074a4.500 4.500 0 0 1 7.376-3.453l-.142.080-4.778 2.758a.795.795 0 0 0-.393.682zm1.097-2.365l2.602-1.500 2.607 1.500v2.999l-2.597 1.500-2.607-1.500z"/></g></svg><i class="mt-[5px] w-2 h-1 rounded-full bg-[#9694ad]"></i></div>
    <div class="ml-[2.5px] w-[50px] h-[50px] rounded-[5px] bg-[#312d45] border border-[#3a364c] flex flex-col items-center pt-[13px]"><span class="w-[22px] h-[22px] bg-[#434343] text-[13px] font-['Liberation_Sans',sans-serif] flex items-center justify-center">G</span><i class="mt-[9px] w-5 h-1 rounded-full bg-[#4cc2ff]"></i></div>
  </div>
  <div class="ml-auto flex items-center pr-[26px]">
    <svg class="w-[14px] h-2" viewBox="0 0 14 8" fill="none" stroke="#fff" stroke-width="1.800"><path d="M1 7.500L7 1.500l6 6"/></svg>
    <svg class="ml-[23px] w-5 h-[14px] -mt-0.5" viewBox="0 0 20 14"><path d="M4 13a4 4 0 0 1 0-8 6.500 6.500 0 0 1 12 0 4 4 0 0 1 0 8z" fill="#a5a5a8"/><path d="M1 12L13 5.500c4-.5 7 1 7 4.500 0 2.500-2 3.500-4 3.500H4c-1.500 0-2.500-.5-3-1.500z" fill="#fff"/></svg>
    <div class="ml-[23px] w-[30px] text-[14.5px] leading-[20px] text-center -mt-px">ENG<br>US</div>
    <svg class="ml-[22px] w-5 h-4 -mt-0.5" viewBox="0 0 20 16" fill="none" stroke="#fff" stroke-width="1.500"><path d="M.7 6.500a13 13 0 0 1 18.600 0M3.500 9.300a9 9 0 0 1 13 0M6.300 12a5.300 5.300 0 0 1 7.400 0"/><circle cx="10" cy="14" r="1.600" fill="#fff" stroke="none"/></svg>
    <svg class="ml-2.5 w-5 h-4 -mt-0.5" viewBox="0 0 20 16" fill="none" stroke="#fff" stroke-width="1.300"><path d="M.8 5.500H4l4.500-4v13L4 10.500H.8zM12 5l6.500 6.500M18.500 5L12 11.500"/></svg>
    <svg class="ml-2.5 w-[21px] h-[14px] -mt-0.5" viewBox="0 0 21 14"><rect x=".8" y=".8" width="17" height="12" rx="3" fill="none" stroke="#fff" stroke-width="1.400"/><rect x="3" y="3" width="10" height="7.600" rx="1" fill="#fff"/><path d="M19 4.500q1.800 0 1.800 2.300T19 9z" fill="#fff"/></svg>
    <div class="ml-[17px] w-[80px] text-[14.8px] leading-[20px] text-right -mt-[2px]">11:38<br>23-04-2024</div>
    <svg class="ml-[11px] w-[17px] h-5 -mt-px" viewBox="0 0 17 20" fill="#8fe5ff"><path d="M8.500.5c4 0 6 3 6 6.500v4l2 4.500H.5l2-4.500V7c0-3.500 2-6.500 6-6.500z"/><path d="M5.500 17h6c-.5 2-1.500 2.500-3 2.500s-2.500-.5-3-2.500z"/></svg>
  </div>
</footer>
</body>
</html>
